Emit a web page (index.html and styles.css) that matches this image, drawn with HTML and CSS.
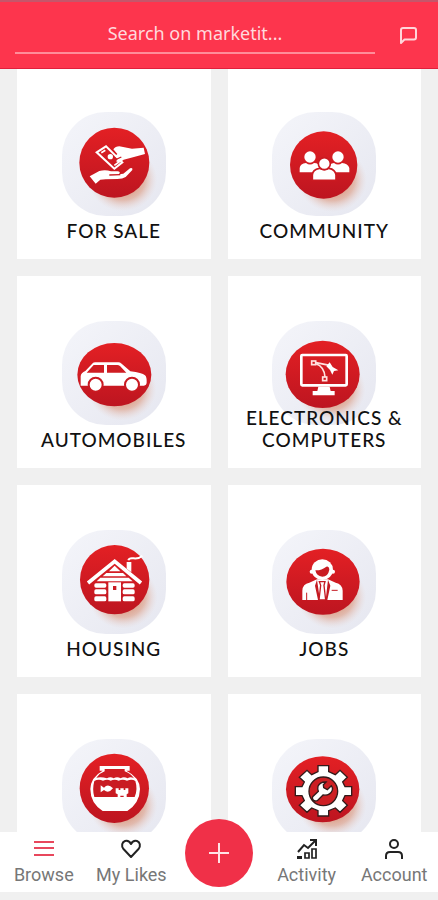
FILE: index.html
```html
<!DOCTYPE html>
<html lang="en">
<head>
<meta charset="utf-8">
<meta name="viewport" content="width=device-width, initial-scale=1">
<title>marketit</title>
<link rel="stylesheet" href="styles.css">
</head>
<body>
<svg class="defs" width="0" height="0" aria-hidden="true">
  <defs>
    <linearGradient id="disc" x1="0" y1="0" x2="0" y2="1">
      <stop offset="0" stop-color="#e32024"/>
      <stop offset="1" stop-color="#bd1520"/>
    </linearGradient>
    <radialGradient id="glow">
      <stop offset="0" stop-color="#c9501f" stop-opacity=".9"/>
      <stop offset=".65" stop-color="#d98a6a" stop-opacity=".5"/>
      <stop offset="1" stop-color="#e8cfc8" stop-opacity="0"/>
    </radialGradient>
  </defs>
</svg>
<div class="app">
  <header class="topbar">
    <input class="search" type="text" placeholder="Search on marketit..." aria-label="Search on marketit">
    <button class="chat" type="button" aria-label="Messages">
      <svg width="20" height="20" viewBox="0 0 20 20" fill="none" stroke="#ffd5da" stroke-width="2" stroke-linejoin="round"><path d="M2 17V4Q2 2 4 2H15Q17 2 17 4V11.500Q17 13.500 15 13.500H5.500Z"/></svg>
    </button>
  </header>

  <main class="browse">
    <div class="grid">
      <a class="card" href="#for-sale">
        <svg class="badge" viewBox="36 36 312 312" aria-hidden="true">
          <ellipse cx="218" cy="238" rx="104" ry="96" fill="url(#glow)"/>
          <circle cx="193" cy="188" r="105" fill="url(#disc)"/>
          <path d="M140 157L168 139L217 187L193 206Z" fill="none" stroke="#fff" stroke-width="6"/>
          <path d="M154 158L166 151M193 196L207 186" stroke="#fff" stroke-width="5"/>
          <circle cx="181" cy="170" r="8" fill="#fff"/>
          <path d="M190 148Q196 139 208 139L246 146L281 143L285 162L249 172L221 179L209 188L198 184L204 176L194 169L202 162Z" fill="#fff"/>
          <path d="M201 177L214 171" stroke="#c91b22" stroke-width="4"/>
          <path d="M119 229L148 213Q166 208 183 214L204 214Q214 217 206 223L220 221L240 205Q249 202 247 210L227 231Q218 237 202 237L167 238L151 239L137 251Z" fill="#fff"/>
          <path d="M178 225L211 224" stroke="#c91b22" stroke-width="4"/>
        </svg>
        <span class="label">FOR SALE</span>
      </a>

      <a class="card" href="#community">
        <svg class="badge" viewBox="39 36 312 312" aria-hidden="true">
          <ellipse cx="220" cy="240" rx="104" ry="96" fill="url(#glow)"/>
          <circle cx="194" cy="195" r="101" fill="url(#disc)"/>
          <g fill="#fff">
            <circle cx="153" cy="171" r="17"/>
            <circle cx="237" cy="171" r="17"/>
            <path d="M122 217V204Q124 190 141 189Q153 198 165 189Q181 189 184 203V217Z"/>
            <path d="M208 217V203Q211 190 225 189Q237 198 249 189Q267 190 271 204V217Z"/>
          </g>
          <g fill="#fff" stroke="#cb1a22" stroke-width="5">
            <path d="M160 241V225Q161 208 181 205Q196 213 210 205Q229 208 231 225V241Z"/>
            <circle cx="196" cy="191" r="18"/>
          </g>
        </svg>
        <span class="label">COMMUNITY</span>
      </a>

      <a class="card" href="#automobiles">
        <svg class="badge" viewBox="96 33 312 312" aria-hidden="true">
          <ellipse cx="276" cy="236" rx="104" ry="96" fill="url(#glow)"/>
          <ellipse cx="253" cy="194" rx="111" ry="95" fill="url(#disc)"/>
          <path d="M152 225V199Q153 188 166 183L188 160Q190 157 196 157H265Q270 157 275 161L301 184Q336 188 345 196Q351 201 350 219Q350 226 342 227H152Z" fill="#fff"/>
          <path d="M191 165H222V188H170ZM231 165H262Q266 165 270 168L289 188H231Z" fill="#cf1c22"/>
          <g fill="#fff" stroke="#c91a22" stroke-width="6">
            <circle cx="197" cy="224" r="21"/>
            <circle cx="306" cy="224" r="21"/>
          </g>
        </svg>
        <span class="label">AUTOMOBILES</span>
      </a>

      <a class="card" href="#electronics">
        <svg class="badge" viewBox="129 33 312 312" aria-hidden="true">
          <ellipse cx="306" cy="238" rx="104" ry="96" fill="url(#glow)"/>
          <ellipse cx="281" cy="193" rx="111" ry="101" fill="url(#disc)"/>
          <rect x="217" y="135" width="136" height="91" rx="3" fill="none" stroke="#fff" stroke-width="8"/>
          <path d="M268 230H302L305 243H317V256H251V243H265Z" fill="#fff"/>
          <g fill="none" stroke="#ffe1df" stroke-width="5">
            <rect x="248" y="153" width="12" height="11"/>
            <rect x="281" y="201" width="12" height="11"/>
            <path d="M261 158L302 166M261 161Q286 170 288 201"/>
          </g>
          <path d="M302 157L311 171L328 181L315 183L310 194L303 180L292 169Z" fill="#fff"/>
        </svg>
        <span class="label">ELECTRONICS &amp; COMPUTERS</span>
      </a>

      <a class="card" href="#housing">
        <svg class="badge" viewBox="36 30 312 312" aria-hidden="true">
          <ellipse cx="219" cy="230" rx="104" ry="96" fill="url(#glow)"/>
          <circle cx="194" cy="179" r="104" fill="url(#disc)"/>
          <path d="M114 189L194 124L273 189" fill="none" stroke="#fff" stroke-width="11"/>
          <path d="M230 146V126H244V157Z" fill="#fff"/>
          <path d="M235 121Q237 113 251 115Q266 117 277 107" fill="none" stroke="#fff" stroke-width="6"/>
          <g fill="#fff">
            <path d="M194 137L211 154H177ZM169 159H219L229 169H158ZM151 173H236L248 184H140Z"/>
            <rect x="133" y="190" width="36" height="13" rx="5"/>
            <rect x="133" y="208" width="36" height="15" rx="5"/>
            <rect x="133" y="229" width="36" height="15" rx="5"/>
            <rect x="218" y="190" width="36" height="13" rx="5"/>
            <rect x="218" y="208" width="36" height="15" rx="5"/>
            <rect x="218" y="229" width="36" height="15" rx="5"/>
            <rect x="175" y="187" width="38" height="57"/>
          </g>
          <rect x="189" y="198" width="10" height="12" fill="#c91a22"/>
        </svg>
        <span class="label">HOUSING</span>
      </a>

      <a class="card" href="#jobs">
        <svg class="badge" viewBox="39 30 312 312" aria-hidden="true">
          <ellipse cx="218" cy="230" rx="104" ry="96" fill="url(#glow)"/>
          <ellipse cx="192" cy="185" rx="110" ry="99" fill="url(#disc)"/>
          <ellipse cx="190" cy="149" rx="32" ry="31" fill="#fff"/>
          <circle cx="158" cy="155" r="6" fill="#fff"/>
          <circle cx="222" cy="155" r="6" fill="#fff"/>
          <path d="M169 151Q187 152 202 140Q210 138 211 149Q207 170 190 170Q172 168 169 151Z" fill="#c91b22"/>
          <path d="M130 240V212Q131 191 151 188L174 178H207L230 188Q250 192 251 212V240Z" fill="#fff"/>
          <path d="M174 179L183 240H177L168 197ZM207 179L200 240H205L214 197Z" fill="#c51a22"/>
          <path d="M181 185H198L195 196L200 240H180L185 196Z" fill="#fff" stroke="#c51a22" stroke-width="4"/>
          <path d="M143 218V240" stroke="#c51a22" stroke-width="3"/>
          <path d="M218 211H236" stroke="#c51a22" stroke-width="3"/>
        </svg>
        <span class="label">JOBS</span>
      </a>

      <a class="card" href="#pets" aria-label="Pets">
        <svg class="badge" viewBox="36 42 312 312" aria-hidden="true">
          <ellipse cx="219" cy="240" rx="104" ry="96" fill="url(#glow)"/>
          <circle cx="193" cy="190" r="104" fill="url(#disc)"/>
          <path d="M149 123H239V137H229Q269 157 270 192Q269 234 232 258H158Q121 234 121 192Q122 157 158 137H149Z" fill="#fff"/>
          <path d="M164 132H224V139Q242 145 252 160Q241 154 233 160Q221 154 212 160Q201 154 191 160Q181 154 171 160Q154 154 139 158Q148 145 164 139Z" fill="#cf1d23"/>
          <path d="M133 168Q145 161 159 167Q172 161 182 167Q194 161 206 167Q218 161 231 167Q246 161 256 168Q264 194 254 216H133Q126 193 133 168Z" fill="#c91b22"/>
          <path d="M152 181L162 188Q174 174 189 190Q176 207 162 195L152 202Z" fill="#fff"/>
          <path d="M197 190H206V195H211V190H221V195H226V190H235V205L230 208V218H221V212H211V218H203V208L197 205Z" fill="#fff"/>
        </svg>
      </a>

      <a class="card" href="#services" aria-label="Services">
        <svg class="badge" viewBox="39 42 312 312" aria-hidden="true">
          <ellipse cx="219" cy="240" rx="104" ry="96" fill="url(#glow)"/>
          <ellipse cx="191" cy="193" rx="110" ry="99" fill="url(#disc)"/>
          <path d="M177 122H209V140L229 149L243 136L265 157L251 171L258 185H278V212H258L251 227L265 241L243 262L229 249L209 257V273H177V257L158 249L144 262L121 241L136 227L129 212H109V185H129L136 171L121 157L144 136L158 149L177 140Z" fill="#fff" stroke="#321b1b" stroke-width="4"/>
          <circle cx="193" cy="199" r="43" fill="#cd1f24" stroke="#321b1b" stroke-width="4"/>
          <path d="M201 171Q183 170 177 184Q175 192 178 199L161 215Q158 225 168 228L175 227L192 210Q213 213 220 196Q222 187 217 182L205 194L194 188L193 179Z" fill="#fff" stroke="#321b1b" stroke-width="4"/>
        </svg>
      </a>
    </div>
  </main>

  <nav class="tabs" aria-label="Main">
    <a class="tab" href="#browse">
      <svg width="24" height="24" viewBox="0 0 24 24" stroke="#e8475c" stroke-width="2"><path d="M2 5H22M2 11H22M2 18H22"/></svg>
      <span>Browse</span>
    </a>
    <a class="tab" href="#likes">
      <svg width="24" height="24" viewBox="0 0 24 24" fill="none" stroke="#222" stroke-width="2" stroke-linejoin="round"><path d="M12 20L4.500 12C2 9 3 5 6 4Q10 3 12 7Q14 3 18 4C21 5 22 9 19.500 12Z"/></svg>
      <span>My Likes</span>
    </a>
    <div class="tab">
      <button class="add" type="button" aria-label="Add listing">
        <svg width="24" height="24" viewBox="0 0 24 24" stroke="#ffe3e6" stroke-width="2"><path d="M12 2V22M2 12H22"/></svg>
      </button>
    </div>
    <a class="tab" href="#activity">
      <svg width="24" height="24" viewBox="0 0 24 24" fill="none" stroke="#222">
        <path d="M3 15L9 8L13 11L20 4M15 3H21V9" stroke-width="2"/>
        <path d="M2 19H7V22H2Z" fill="#222" stroke="none"/>
        <path d="M10 16H14V21H10ZM17 12H21V21H17Z" stroke-width="1.700"/>
      </svg>
      <span>Activity</span>
    </a>
    <a class="tab" href="#account">
      <svg width="24" height="24" viewBox="0 0 24 24" fill="none" stroke="#222" stroke-width="2"><circle cx="12" cy="7" r="4"/><path d="M4 22V19Q4 15 8 15H16Q20 15 20 19V22"/></svg>
      <span>Account</span>
    </a>
  </nav>
</div>
</body>
</html>
```
FILE: styles.css
```css
* {
  box-sizing: border-box;
}

body {
  margin: 0;
  background: #f0f0f0;
  font-family: Roboto, "Liberation Sans", sans-serif;
}

a {
  color: inherit;
  text-decoration: none;
}

button {
  border: 0;
  padding: 0;
  background: none;
  cursor: pointer;
}

svg {
  display: block;
}

.defs {
  position: absolute;
}

.app {
  display: flex;
  flex-direction: column;
  height: 100vh;
}

/* Top bar */
.topbar {
  position: relative;
  z-index: 1;
  flex: none;
  display: flex;
  align-items: flex-start;
  gap: 20px;
  padding: 12px 15px 10px;
  border-top: 2px solid #c5566a;
  border-bottom: 1px solid #e01f3c;
  background: #fd354d;
}

.search {
  flex: 1;
  min-width: 0;
  height: 40px;
  padding: 0;
  border: 0;
  border-bottom: 2px solid #ff8d9a;
  border-radius: 0;
  outline: 0;
  background: none;
  color: #fff;
  font-family: "Noto Sans", "Open Sans", sans-serif;
  font-size: 18px;
  text-align: center;
}

.search::placeholder {
  color: #ffd9dd;
  opacity: 1;
}

.chat {
  display: grid;
  place-items: center;
  width: 28px;
  height: 44px;
}

/* Category grid */
.browse {
  flex: 1;
  min-height: 0;
  margin-top: -2px;
  overflow-y: auto;
  scrollbar-width: none;
}

.grid {
  display: grid;
  grid-template-columns: 1fr 1fr;
  gap: 17px;
  padding: 0 17px 17px;
}

.card {
  display: grid;
  grid-template-areas: "stack";
  justify-items: center;
  min-height: 192px;
  padding: 45px 8px 17px;
  background: #fff;
}

.badge {
  grid-area: stack;
  width: 104px;
  height: 104px;
  border-radius: 44px;
  background: linear-gradient(135deg, #f4f5fa, #e6e7f0);
}

.label {
  grid-area: stack;
  align-self: end;
  color: #111;
  font-family: Lato, "Open Sans", sans-serif;
  font-size: 19px;
  font-weight: 500;
  line-height: 22px;
  letter-spacing: 1px;
  text-align: center;
}

/* Bottom tabs */
.tabs {
  position: relative;
  flex: none;
  display: grid;
  grid-template-columns: repeat(5, 1fr);
  margin-bottom: 8px;
  background: #fff;
}

.tab {
  display: flex;
  flex-direction: column;
  align-items: center;
  gap: 2px;
  height: 60px;
  padding-top: 5px;
  color: #777;
  font-size: 18px;
  line-height: 24px;
  white-space: nowrap;
}

.add {
  position: absolute;
  top: -13px;
  display: grid;
  place-items: center;
  width: 68px;
  height: 68px;
  border-radius: 50%;
  background: #f03048;
}
```
